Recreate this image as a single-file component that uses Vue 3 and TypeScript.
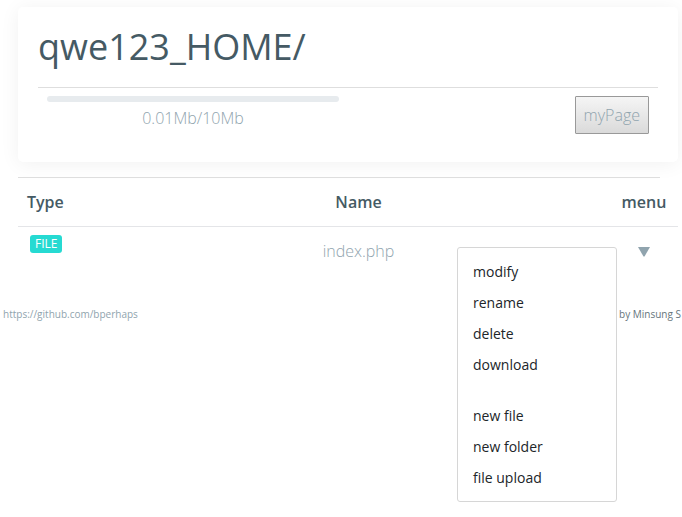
<script setup lang="ts">
import { ref } from 'vue'

interface FileEntry {
  type: string
  name: string
}

const files: FileEntry[] = [{ type: 'FILE', name: 'index.php' }]
const menuGroups: string[][] = [
  ['modify', 'rename', 'delete', 'download'],
  ['new file', 'new folder', 'file upload'],
]
const usedMb = 0.01
const totalMb = 10
const menuOpen = ref(true)
</script>

<template>
  <div class="page">
    <main class="content">
      <header class="card">
        <h1 class="title">qwe123_HOME/</h1>
        <div class="summary">
          <div class="usage">
            <div
              class="track"
              role="progressbar"
              aria-label="Storage used"
              :aria-valuenow="usedMb"
              aria-valuemin="0"
              :aria-valuemax="totalMb"
            ></div>
            <span>{{ usedMb }}Mb/{{ totalMb }}Mb</span>
          </div>
          <button class="my-page" type="button">myPage</button>
        </div>
      </header>

      <hr class="rule" />

      <div class="listing">
        <table class="files">
          <thead>
            <tr>
              <th class="type">Type</th>
              <th class="name">Name</th>
              <th class="actions">menu</th>
            </tr>
          </thead>
          <tbody>
            <tr v-for="file in files" :key="file.name">
              <td class="type"><span class="badge">{{ file.type }}</span></td>
              <td class="name">{{ file.name }}</td>
              <td class="actions">
                <button
                  class="toggle"
                  type="button"
                  aria-label="File menu"
                  :aria-expanded="menuOpen"
                  @click="menuOpen = !menuOpen"
                >
                  <svg width="12" height="10" viewBox="0 0 12 10" aria-hidden="true">
                    <path d="M0 0H12L6.5 9.5H5.5Z" fill="#90a4ae" />
                  </svg>
                </button>
              </td>
            </tr>
          </tbody>
        </table>

        <div v-if="menuOpen" class="menu">
          <ul v-for="(group, index) in menuGroups" :key="index">
            <li v-for="item in group" :key="item">
              <button type="button">{{ item }}</button>
            </li>
          </ul>
        </div>
      </div>
    </main>

    <footer class="footer">
      <a href="https://github.com/bperhaps">https://github.com/bperhaps</a>
      <span class="credit">by Minsung S</span>
    </footer>
  </div>
</template>

<style>
body {
  margin: 0;
  background: #fff;
}
</style>

<style scoped>
.page {
  overflow-x: hidden;
  min-height: 100vh;
  color: #90a4ae;
  font-family: 'Open Sans', 'Noto Sans', sans-serif;
  font-size: 16px;
  font-weight: 300;
  line-height: 24px;
}

.content {
  padding: 7px 4px 0 18px;
}

.card {
  box-sizing: border-box;
  min-height: 155px;
  padding: 16px 20px 28px;
  border-radius: 5px;
  background: #fff;
  box-shadow: 0 2px 20px rgba(0, 0, 0, 0.06);
}

.title {
  margin: 0;
  padding-bottom: 16px;
  border-bottom: 1px solid #dedede;
  color: #455a64;
  font-size: 36px;
  font-weight: 400;
  line-height: 48px;
}

.summary {
  display: flex;
  justify-content: space-between;
  padding: 8px 9px 0;
}

.usage {
  width: 292px;
  text-align: center;
}

.track {
  height: 6px;
  margin-bottom: 4px;
  border-radius: 3px;
  background: #e7ebee;
}

.my-page {
  height: 38px;
  padding: 0 8px;
  border: 1px solid #999;
  border-radius: 1px;
  background: linear-gradient(#f5f5f5, #dadada);
  color: inherit;
  font: inherit;
}

.rule {
  position: relative;
  height: 1px;
  margin: 15px 18px 0 0;
  border: 0;
  background: #dedede;
}

.listing {
  position: relative;
}

.files {
  width: 100%;
  border-collapse: collapse;
  table-layout: fixed;
}

th {
  height: 48px;
  padding: 0;
  border-bottom: 1px solid #e4e5e8;
  color: #455a64;
  font-weight: 600;
}

td {
  height: 40px;
  padding: 5px 0;
  vertical-align: top;
}

td.name,
td.actions {
  padding-top: 12px;
}

.type {
  width: 80px;
  text-align: left;
}

th.type {
  padding-left: 9px;
}

td.type {
  padding: 6px 0 0 12px;
  line-height: 18px;
}

.name {
  text-align: center;
}

.actions {
  width: 68px;
  text-align: center;
}

.badge {
  display: inline-block;
  padding: 0 5px;
  border-radius: 3px;
  background: #26dad2;
  color: #fff;
  font-size: 12px;
  font-weight: 400;
  line-height: 18px;
}

.toggle {
  display: inline-flex;
  padding: 0;
  border: 0;
  background: none;
  cursor: pointer;
}

.menu {
  position: absolute;
  top: 69px;
  right: 61px;
  box-sizing: border-box;
  width: 160px;
  padding: 8px 0;
  border: 1px solid #d6d6d6;
  border-radius: 3px;
  background: #fff;
}

.menu ul {
  margin: 0;
  padding: 0;
  list-style: none;
}

.menu ul + ul {
  margin-top: 20px;
}

.menu li {
  display: flex;
}

.menu button {
  flex: 1;
  height: 31px;
  padding: 0 15px;
  border: 0;
  background: none;
  color: #212529;
  font: inherit;
  font-size: 14px;
  font-weight: 400;
  text-align: left;
}

.footer {
  display: flex;
  justify-content: space-between;
  padding: 21px 1px 0 3px;
  font-size: 10px;
  font-weight: 400;
  line-height: 18px;
  white-space: nowrap;
}

.footer a {
  color: inherit;
  text-decoration: none;
}

.credit {
  color: #67757c;
}
</style>
